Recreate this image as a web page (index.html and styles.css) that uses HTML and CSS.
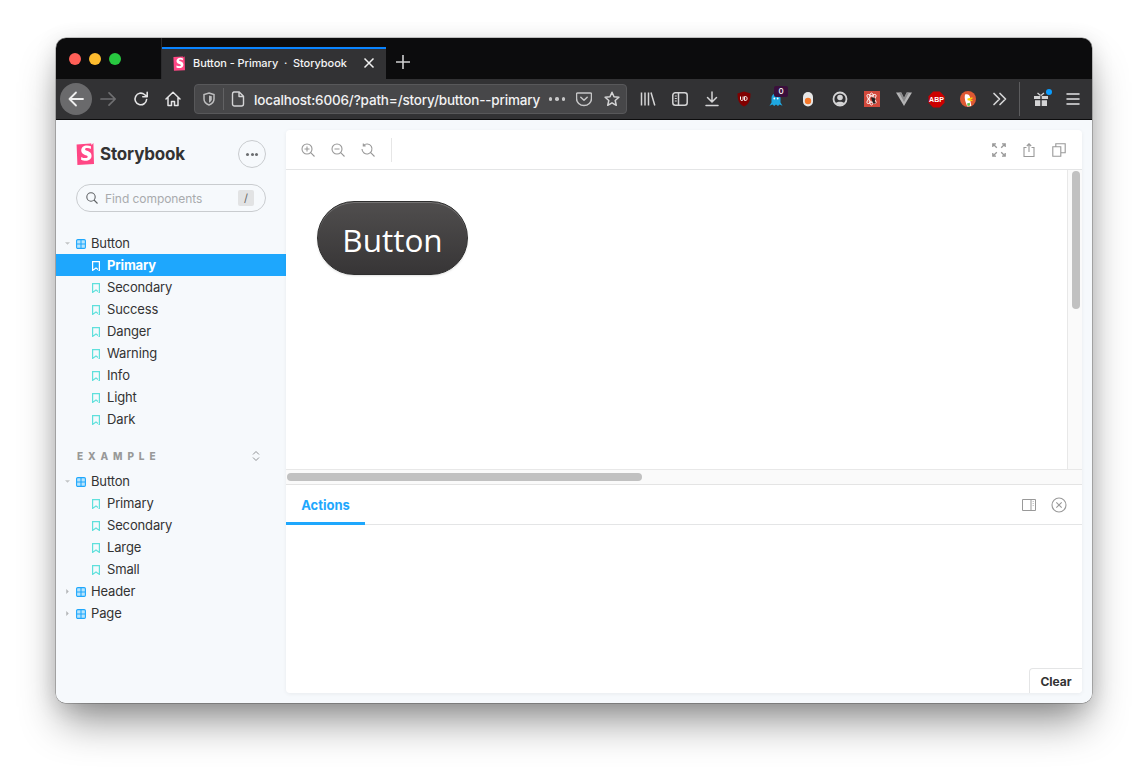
FILE: index.html
```html
<!DOCTYPE html>
<html lang="en">
<head>
<meta charset="utf-8">
<title>Button - Primary · Storybook</title>
<link rel="stylesheet" href="styles.css">
</head>
<body>
<svg class="sprite" aria-hidden="true">
  <symbol id="sb" viewBox="0 0 18 22"><path d="M0.6 1.4 L14.6 0.5 L15 0 L15.6 2 L17.4 0 L18 21 L1.4 22 Z" fill="#ff4785"/><path transform="matrix(1.16 0 0 1.13 -.33 -.7)" d="M13.2 3.6l-.1 2.3c-.9-.5-2-.8-3.2-.8-1.1 0-1.8.4-1.800 1.100 0 1.900 5.600 1 5.600 5.700 0 2.900-2.300 4.500-5.100 4.500-1.300 0-2.800-.3-3.900-.9l.1-2.600c1.100.7 2.500 1.100 3.700 1.100 1.100 0 1.900-.4 1.900-1.200 0-2-5.600-1.200-5.600-5.600 0-2.700 2.100-4.400 5-4.400 1.200 0 2.300.2 3.400.8z" fill="#fff"/></symbol>
  <symbol id="grid" viewBox="0 0 10 10"><rect x=".6" y=".6" width="8.8" height="8.8" rx="1.200" fill="#b9e4fb" stroke="#1ea7fd" stroke-width="1.100"/><path d="M5 1v8M1 5h8" stroke="#1ea7fd" stroke-width="1.100"/></symbol>
  <symbol id="mark" viewBox="0 0 8 10"><path d="M.6.6h6.800v8.800L4 7 .6 9.400z" fill="none" stroke="currentColor" stroke-width="1.200"/></symbol>
  <symbol id="caret-d" viewBox="0 0 6 6"><path d="M0 1.500h6L3 4.500z" fill="#c2c4c6"/></symbol>
  <symbol id="caret-r" viewBox="0 0 6 6"><path d="M1.500 0v6l3-3z" fill="#b4b6b8"/></symbol>
</svg>

<main class="window">
  <header class="titlebar">
    <div class="lights">
      <span class="light red"></span><span class="light amber"></span><span class="light green"></span>
    </div>
    <div class="tab">
      <svg class="favicon"><use href="#sb"/></svg>
      <span class="tab-title">Button - Primary &nbsp;·&nbsp; Storybook</span>
      <svg class="tab-close" viewBox="0 0 12 12"><path d="M1.500 1.500l9 9M10.500 1.500l-9 9"/></svg>
    </div>
    <svg class="new-tab" viewBox="0 0 14 14"><path d="M7 0v14M0 7h14"/></svg>
  </header>

  <nav class="toolbar">
    <span class="tool back"><svg viewBox="0 0 20 20" class="ic20"><path d="M17 10H3.500M10 3.500L3.500 10l6.500 6.500" fill="none" stroke="#eee" stroke-width="1.800" stroke-linecap="round" stroke-linejoin="round"/></svg></span>
    <span class="tool forward"><svg viewBox="0 0 20 20" class="ic20"><path d="M2 10h14M10 3.800L16.200 10 10 16.200" fill="none" stroke="#6f6f71" stroke-width="1.700" stroke-linecap="round" stroke-linejoin="round"/></svg></span>
    <span class="tool"><svg viewBox="0 0 16 16" class="ic16"><path d="M13.600 8.500A5.800 5.800 0 1 1 11.500 3.500L14 5.600M14.200 1.400v4.400H9.800" fill="none" stroke="#e4e4e5" stroke-width="1.600" stroke-linecap="round" stroke-linejoin="round"/></svg></span>
    <span class="tool"><svg viewBox="0 0 16 16" class="ic16"><path d="M1 8L8 1.300 15 8M3 6.500v8h3.500v-4h3v4H13v-8" fill="none" stroke="#e4e4e5" stroke-width="1.500" stroke-linecap="round" stroke-linejoin="round"/></svg></span>

    <div class="urlbar">
      <svg viewBox="0 0 14 14" class="ic14"><path d="M7 1l5 1.500v4.500c0 3-2.500 5-5 6-2.500-1-5-3-5-6V2.500z" fill="none" stroke="#bdbdbe" stroke-width="1.500"/><path d="M7 3.500l2.800.8v3c0 1.600-1.300 2.700-2.800 3.400z" fill="#bdbdbe"/></svg>
      <span class="url-sep"></span>
      <svg viewBox="0 0 14 16" class="ic-page"><path d="M2.800 1h5.400L12.500 5.300V13a2 2 0 0 1-2 2h-7a2 2 0 0 1-2-2V3a2 2 0 0 1 1.300-2zM8 1v4.500h4.500" fill="none" stroke="#d4d4d5" stroke-width="1.400" stroke-linejoin="round"/></svg>
      <span class="url-text">localhost:6006/?path=/story/button--primary</span>
      <span class="url-dots"><i></i><i></i><i></i></span>
      <svg viewBox="0 0 16 16" class="ic16 url-pocket"><path d="M1.500 2h13a1 1 0 0 1 1 1v4.500a7.500 7 0 0 1-15 0V3a1 1 0 0 1 1-1z" fill="none" stroke="#c6c6c7" stroke-width="1.500"/><path d="M4.800 6.200L8 9.300l3.200-3.100" fill="none" stroke="#c6c6c7" stroke-width="1.500" stroke-linecap="round" stroke-linejoin="round"/></svg>
      <svg viewBox="0 0 16 16" class="ic16 url-star"><path d="M8 1.300l2 4.500 4.900.5-3.700 3.200 1.100 4.800L8 11.800l-4.300 2.500 1.100-4.800L1.100 6.300 6 5.800z" fill="none" stroke="#d4d4d5" stroke-width="1.500" stroke-linejoin="round"/></svg>
    </div>

    <div class="extensions">
      <span class="tool"><svg viewBox="0 0 16 16" class="ic16"><path d="M1.500 1.500v13M5 1.500v13M8.500 1.500v13M11 1.500l3.800 13" fill="none" stroke="#d4d4d5" stroke-width="1.500"/></svg></span>
      <span class="tool"><svg viewBox="0 0 16 16" class="ic16"><rect x=".8" y="1.800" width="14.400" height="12.400" rx="2.500" fill="none" stroke="#d4d4d5" stroke-width="1.500"/><path d="M6.500 2v12" stroke="#d4d4d5" stroke-width="1.500"/><path d="M2.800 5h2M2.800 7.500h2M2.800 10h2" stroke="#d4d4d5"/></svg></span>
      <span class="tool"><svg viewBox="0 0 16 16" class="ic16"><path d="M8 1v9.500M3.500 6.500L8 11l4.500-4.500M2 14.500h12" fill="none" stroke="#d4d4d5" stroke-width="1.500" stroke-linecap="round" stroke-linejoin="round"/></svg></span>
      <span class="tool"><svg viewBox="0 0 16 16" class="ic16"><path d="M8 .5l6.500 2c0 6-1 10.500-6.500 13-5.500-2.500-6.500-7-6.500-13z" fill="#800000"/><path d="M4.500 5.500v3c0 1.300 2.600 1.300 2.600 0v-3M8.600 5.500v4h1c2 0 2-4 0-4z" fill="none" stroke="#fff"/></svg></span>
      <span class="tool ghost"><svg viewBox="0 0 16 16" class="ic16"><path d="M1.500 14.800l2-3.300V7a4.500 4.500 0 0 1 9 0v4.500l2 3.300-3-1.200-1.500 1.400L8 13.400l-1.800 1.700-1.700-1.500z" fill="#1ea7e0"/><circle cx="6.300" cy="7.500" r=".9" fill="#fff"/><circle cx="9.700" cy="7.500" r=".9" fill="#fff"/></svg><b class="badge">0</b></span>
      <span class="tool"><svg viewBox="0 0 16 16" class="ic16"><rect x="3" y="1" width="10" height="14.500" rx="5" fill="#e6e6e6"/><circle cx="8" cy="10" r="3.200" fill="#f5782b"/></svg></span>
      <span class="tool"><svg viewBox="0 0 16 16" class="ic16"><circle cx="8" cy="8" r="6.500" fill="none" stroke="#d4d4d5" stroke-width="1.800"/><circle cx="8" cy="6.500" r="2.800" fill="#d4d4d5"/><path d="M3.500 12.500c1-2.500 8-2.500 9 0l-4.500 2z" fill="#d4d4d5"/></svg></span>
      <span class="tool"><svg viewBox="0 0 16 16" class="ic16"><rect width="16" height="16" fill="#d2493c"/><g fill="none" stroke="#fff" stroke-width=".9"><ellipse cx="7.500" cy="8" rx="6" ry="2.400" transform="rotate(45 7.500 8)"/><ellipse cx="7.500" cy="8" rx="6" ry="2.400" transform="rotate(-45 7.500 8)"/><ellipse cx="7.500" cy="8" rx="6" ry="2.400" transform="rotate(90 7.500 8)"/></g><path d="M7 6.500h3l1.500 1.500-.8 2.200 1.300 2-2.500.5-1.300-2.500z" fill="#23201f"/></svg></span>
      <span class="tool"><svg viewBox="0 0 16 16" class="ic16"><path d="M0 1.500h5.300L8 7l2.700-5.500H16L8 15z" fill="#b4b4b5"/><path d="M3 1.500h2.300L8 7l2.700-5.500H13L8 11z" fill="#8b8b8c"/></svg></span>
      <span class="tool"><svg viewBox="0 0 17 17" class="ic17"><path d="M5.200.5h6.600l4.700 4.700v6.600l-4.700 4.700H5.200L.5 11.800V5.200z" fill="#cc0000"/><text x="8.500" y="11.300" class="abp">ABP</text></svg></span>
      <span class="tool"><svg viewBox="0 0 16 16" class="ic16"><circle cx="8" cy="8" r="8" fill="#de5833"/><path d="M5 3.500c3-1 5 .5 5 3 0 2 .8 5 1.300 8.500l-4 .5C6 12 4 8 5 3.500z" fill="#fff"/><path d="M7.500 7.500l5-1.200v1.500l-2.500.7 2.500.4v1.400l-5-1z" fill="#fdd209"/><path d="M7 12.500l2.800-.8.300 2.800-2.500.5z" fill="#65bc46"/></svg></span>
      <span class="tool"><svg viewBox="0 0 16 16" class="ic16"><path d="M2 2.500L7.500 8 2 13.500M8 2.500L13.500 8 8 13.500" fill="none" stroke="#d4d4d5" stroke-width="1.700" stroke-linecap="round" stroke-linejoin="round"/></svg></span>
    </div>
    <span class="tool-sep"></span>
    <span class="tool gift"><svg viewBox="0 0 16 16" class="ic16"><path d="M1 5h6.300v3H1zM8.700 5H15v3H8.700zM2 9.300h5.300V15H2zM8.700 9.300H14V15H8.700z" fill="#d4d4d5"/><path d="M4.500 2l3 2.500M11 2L8 4.500" stroke="#d4d4d5" stroke-width="1.300"/></svg><i class="gift-dot"></i></span>
    <span class="tool"><svg viewBox="0 0 16 16" class="ic16"><path d="M2 3h12M2 8h12M2 13h12" stroke="#e4e4e5" stroke-width="1.500" stroke-linecap="round"/></svg></span>
  </nav>

  <div class="app">
    <aside class="sidebar">
      <div class="brand">
        <div class="logo">
          <svg class="logo-mark"><use href="#sb"/></svg>
          <span class="logo-text">Storybook</span>
        </div>
        <span class="menu-btn"><i></i><i></i><i></i></span>
      </div>
      <div class="search">
        <svg viewBox="0 0 12 12" class="search-ic"><circle cx="5" cy="5" r="4.200"/><path d="M8 8l3.500 3.500"/></svg>
        <span class="search-ph">Find components</span>
        <kbd class="search-key">/</kbd>
      </div>

      <ul class="tree">
        <li class="row comp"><svg class="caret"><use href="#caret-d"/></svg><svg class="grid"><use href="#grid"/></svg>Button</li>
        <li class="row story active"><svg class="mark"><use href="#mark"/></svg>Primary</li>
        <li class="row story"><svg class="mark"><use href="#mark"/></svg>Secondary</li>
        <li class="row story"><svg class="mark"><use href="#mark"/></svg>Success</li>
        <li class="row story"><svg class="mark"><use href="#mark"/></svg>Danger</li>
        <li class="row story"><svg class="mark"><use href="#mark"/></svg>Warning</li>
        <li class="row story"><svg class="mark"><use href="#mark"/></svg>Info</li>
        <li class="row story"><svg class="mark"><use href="#mark"/></svg>Light</li>
        <li class="row story"><svg class="mark"><use href="#mark"/></svg>Dark</li>
      </ul>

      <div class="group">
        <span class="group-title">EXAMPLE</span>
        <svg viewBox="0 0 8 12" class="group-ic"><path d="M1 4.500L4 1.500l3 3M1 7.500l3 3 3-3"/></svg>
      </div>

      <ul class="tree">
        <li class="row comp"><svg class="caret"><use href="#caret-d"/></svg><svg class="grid"><use href="#grid"/></svg>Button</li>
        <li class="row story"><svg class="mark"><use href="#mark"/></svg>Primary</li>
        <li class="row story"><svg class="mark"><use href="#mark"/></svg>Secondary</li>
        <li class="row story"><svg class="mark"><use href="#mark"/></svg>Large</li>
        <li class="row story"><svg class="mark"><use href="#mark"/></svg>Small</li>
        <li class="row comp"><svg class="caret"><use href="#caret-r"/></svg><svg class="grid"><use href="#grid"/></svg>Header</li>
        <li class="row comp"><svg class="caret"><use href="#caret-r"/></svg><svg class="grid"><use href="#grid"/></svg>Page</li>
      </ul>
    </aside>

    <section class="panel">
      <div class="preview-bar">
        <div class="bar-left">
          <svg viewBox="0 0 14 14" class="bar-ic"><circle cx="6" cy="6" r="5"/><path d="M9.700 9.700L13.500 13.500M6 3.500v5M3.500 6h5"/></svg>
          <svg viewBox="0 0 14 14" class="bar-ic"><circle cx="6" cy="6" r="5"/><path d="M9.700 9.700L13.500 13.500M3.500 6h5"/></svg>
          <svg viewBox="0 0 14 14" class="bar-ic"><path d="M2.300 2.600A5 5 0 1 1 1 6M2.300.6v2.300h2.300M9.700 9.700L13.500 13.500"/></svg>
          <span class="bar-sep"></span>
        </div>
        <div class="bar-right">
          <svg viewBox="0 0 14 14" class="bar-ic strong"><path d="M1 1l3.800 3.800M13 1L9.200 4.800M1 13l3.800-3.800M13 13L9.200 9.200M.8 4V.8H4M10 .8h3.200V4M.8 10v3.200H4M10 13.200h3.200V10"/></svg>
          <svg viewBox="0 0 14 14" class="bar-ic"><path d="M4.500 4.500H2v9h10v-9H9.500M7 9V.8M4.800 3L7 .8 9.200 3"/></svg>
          <svg viewBox="0 0 14 14" class="bar-ic"><path d="M.8 3.800h8v9.400h-8zM3.800 3.800V.8h9.400v9h-4.400"/></svg>
        </div>
      </div>

      <div class="canvas-wrap">
        <div class="canvas">
          <button class="demo-btn" type="button">Button</button>
        </div>
        <div class="v-track"><span class="v-thumb"></span></div>
      </div>
      <div class="h-track"><span class="h-thumb"></span></div>

      <div class="addons">
        <div class="addon-tabs">
          <span class="addon-tab">Actions</span>
          <div class="addon-tools">
            <svg viewBox="0 0 14 12" class="addon-ic"><path d="M.5.500h13v11H.5zM9 .5v11"/><path d="M10.500 2.500h1.500M10.500 4.500h1.500M10.500 6.500h1.500" class="faint"/></svg>
            <svg viewBox="0 0 16 16" class="addon-close"><circle cx="8" cy="8" r="7"/><path d="M5.300 5.300l5.400 5.400M10.700 5.300l-5.400 5.400"/></svg>
          </div>
        </div>
        <div class="addon-body"><button class="clear" type="button">Clear</button></div>
      </div>
    </section>
  </div>
</main>
</body>
</html>
```

FILE: styles.css
```css
* { box-sizing: border-box; }
html, body { height: 100%; }
body {
  margin: 0;
  padding: 38px 56px 0;
  background: #fff;
  overflow: hidden;
  font-family: "Inter", "Liberation Sans", sans-serif;
}
.sprite { display: none; }
ul { list-style: none; margin: 0; padding: 0; }

.window {
  width: 1036px;
  height: 665px;
  display: flex;
  flex-direction: column;
  border-radius: 10px;
  overflow: hidden;
  box-shadow: 0 0 0 .5px rgba(0,0,0,.4), 0 24px 42px -6px rgba(0,0,0,.42), 0 4px 22px rgba(0,0,0,.13);
}

/* title bar */
.titlebar {
  height: 41px;
  flex: none;
  display: flex;
  align-items: stretch;
  background: #0c0c0d;
}
.lights {
  width: 106px;
  flex: none;
  display: flex;
  align-items: flex-start;
  gap: 8px;
  padding: 15px 0 0 13px;
  border-right: 1px solid #2b2b2d;
}
.light { width: 12px; height: 12px; border-radius: 50%; }
.red { background: #ff5f57; }
.amber { background: #febc2e; }
.green { background: #28c840; }
.tab {
  width: 224px;
  margin-top: 9px;
  flex: none;
  display: flex;
  align-items: center;
  padding: 0 11px 2px;
  background: #323234;
  border-top: 2px solid #0a84ff;
}
.favicon { width: 12px; height: 15px; flex: none; }
.tab-title {
  margin-left: 8px;
  flex: 1;
  font-size: 11px;
  font-weight: 500;
  letter-spacing: -.06px;
  color: #f4f4f5;
  white-space: nowrap;
}
.tab-close { width: 12px; height: 12px; flex: none; fill: none; stroke: #f0f0f0; stroke-width: 1.500; }
.new-tab { width: 14px; height: 14px; margin: 17px 0 0 10px; fill: none; stroke: #d0d0d1; stroke-width: 1.600; }

/* toolbar */
.toolbar {
  height: 41px;
  flex: none;
  display: flex;
  align-items: center;
  padding: 0 3px 0 4px;
  background: #323234;
  border-bottom: 1px solid #0c0c0d;
}
.tool {
  width: 32px;
  height: 32px;
  flex: none;
  display: flex;
  align-items: center;
  justify-content: center;
  position: relative;
}
.back { background: #6a6a6c; border-radius: 50%; }
.forward { margin-left: 1px; }
.ic20 { width: 20px; height: 20px; }
.ic16 { width: 16px; height: 16px; }
.ic17 { width: 17px; height: 17px; }
.ic14 { width: 14px; height: 14px; flex: none; }
.ic-page { width: 14px; height: 16px; flex: none; }
.urlbar {
  width: 433px;
  height: 30px;
  margin: 0 5px;
  flex: none;
  display: flex;
  align-items: center;
  padding: 0 6px 0 7px;
  background: #474749;
  border: 1px solid #58585a;
  border-radius: 4px;
}
.url-sep { width: 1px; height: 22px; margin: 0 7px; background: #626264; flex: none; }
.url-text {
  margin-left: 9px;
  padding-top: 2px;
  font-size: 13.500px;
  font-weight: 500;
  color: #f2f2f3;
  white-space: nowrap;
  flex: 1;
  letter-spacing: -.17px;
}
.url-dots { display: flex; gap: 3px; width: 16px; flex: none; margin-right: 11px; }
.url-dots i { width: 3.300px; height: 3.300px; border-radius: 50%; background: #c6c6c7; }
.url-pocket { flex: none; margin-right: 12px; }
.url-star { flex: none; }
.extensions { display: flex; flex: none; }
.badge {
  position: absolute;
  top: 3px;
  left: 14px;
  min-width: 14px;
  height: 11px;
  border-radius: 2px;
  background: #3a0f3c;
  color: #fff;
  font-size: 8px;
  font-weight: 500;
  line-height: 11px;
  text-align: center;
}
.abp { font-family: "Liberation Sans", sans-serif; font-size: 7px; font-weight: 700; fill: #fff; text-anchor: middle; }
.tool-sep { width: 1px; height: 34px; margin: 0 5px 0 3px; background: #5c5c5e; flex: none; }
.gift-dot {
  position: absolute;
  top: 6px;
  right: 5px;
  width: 6px;
  height: 6px;
  border-radius: 50%;
  background: #0a9dff;
}

/* app */
.app { flex: 1; display: flex; min-height: 0; background: #f6f9fc; }
.sidebar { width: 230px; flex: none; color: #333; }
.brand {
  height: 28px;
  margin: 20px 20px 16px;
  display: flex;
  align-items: center;
  justify-content: space-between;
}
.logo { display: flex; align-items: center; }
.logo-mark { width: 18px; height: 22px; flex: none; }
.logo-text { margin-left: 6px; font-size: 17px; font-weight: 700; color: #333; letter-spacing: -.17px; }
.menu-btn {
  width: 28px;
  height: 28px;
  display: flex;
  align-items: center;
  justify-content: center;
  gap: 1.500px;
  border: 1px solid #c8cbce;
  border-radius: 50%;
}
.menu-btn i { width: 3px; height: 3px; border-radius: 50%; background: #6b6d70; }
.search {
  height: 28px;
  margin: 0 20px 20px;
  display: flex;
  align-items: center;
  padding: 0 4px 0 9px;
  border: 1px solid #c9cccf;
  border-radius: 14px;
}
.search-ic { width: 12px; height: 12px; flex: none; fill: none; stroke: #5f6265; stroke-width: 1.100; }
.search-ph { margin-left: 7px; flex: 1; font-size: 12px; letter-spacing: -.06px; color: #a9abad; }
.search-key {
  width: 16px;
  height: 16px;
  font-family: "Inter", "Liberation Sans", sans-serif;
  font-size: 11px;
  line-height: 16px;
  text-align: center;
  color: #666;
  background: #e2e3e4;
  border-radius: 2px;
  margin-right: 7px;
}
.row {
  height: 22px;
  display: flex;
  align-items: center;
  font-size: 13px;
  letter-spacing: -.15px;
  color: #333;
}
.comp { padding-left: 9px; }
.caret { width: 5px; height: 5px; flex: none; margin-right: 6px; margin-top: 1px; }
.grid { width: 10px; height: 10px; flex: none; margin-right: 5px; margin-top: 2px; }
.story { padding-left: 36px; }
.mark { width: 8px; height: 10px; flex: none; margin-right: 7px; margin-top: 2px; color: #5fe0dc; }
.active { background: #1ea7fd; color: #fff; font-weight: 700; }
.active .mark { color: #fff; }
.group {
  height: 40px;
  display: flex;
  align-items: center;
  justify-content: space-between;
  padding: 20px 26px 8px 21px;
}
.group-title { font-size: 10px; font-weight: 800; letter-spacing: .49em; color: #999; }
.group-ic { width: 8px; height: 12px; fill: none; stroke: #8f9194; stroke-width: 1; }

/* panel */
.panel {
  width: 796px;
  height: 563px;
  margin-top: 10px;
  display: flex;
  flex-direction: column;
  background: #fff;
  border-radius: 4px;
  box-shadow: 0 1px 4px rgba(0,0,0,.06);
  overflow: hidden;
}
.preview-bar {
  height: 40px;
  flex: none;
  display: flex;
  align-items: center;
  justify-content: space-between;
  padding: 0 16px 0 15px;
  border-bottom: 1px solid #e4e5e6;
}
.bar-left, .bar-right { display: flex; align-items: center; gap: 16px; }
.bar-ic { width: 14px; height: 14px; flex: none; fill: none; stroke: #999; stroke-width: 1.100; }
.bar-ic.strong { stroke-width: 1.300; }
.bar-sep { width: 1px; height: 24px; background: #e6e6e6; }
.canvas-wrap { height: 299px; flex: none; display: flex; }
.canvas { flex: 1; padding: 31px; background: #fff; }
.demo-btn {
  display: block;
  width: 151px;
  height: 74px;
  padding: 3px 0 0;
  font-family: "Open Sans", sans-serif;
  font-size: 31.500px;
  line-height: 1;
  color: #fff;
  background: linear-gradient(#504e4e, #373536);
  border: 1px solid #2f2f2f;
  border-radius: 37px;
  box-shadow: inset 0 1px 0 rgba(255,255,255,.22), 0 1px 2px rgba(0,0,0,.12);
}
.v-track {
  width: 15px;
  flex: none;
  padding: 1px 3px 0 4px;
  background: #fafafa;
  border-left: 1px solid #e8e8e8;
}
.v-thumb { display: block; width: 8px; height: 138px; border-radius: 4px; background: #c1c1c1; }
.h-track {
  height: 16px;
  flex: none;
  padding: 3px 0 0 1px;
  background: #fafafa;
  border-top: 1px solid #e8e8e8;
  border-bottom: 1px solid #e4e4e4;
}
.h-thumb { display: block; width: 355px; height: 8px; border-radius: 4px; background: #c1c1c1; }
.addons { flex: 1; display: flex; flex-direction: column; min-height: 0; }
.addon-tabs {
  height: 40px;
  flex: none;
  display: flex;
  align-items: stretch;
  justify-content: space-between;
  border-bottom: 1px solid #e4e5e6;
}
.addon-tab {
  width: 79px;
  display: flex;
  align-items: center;
  justify-content: center;
  font-size: 13px;
  font-weight: 700;
  color: #1ea7fd;
  border-bottom: 3px solid #1ea7fd;
  margin-bottom: -1px;
  padding-top: 3px;
}
.addon-tools { display: flex; align-items: center; gap: 15px; padding-right: 15px; }
.addon-ic { width: 14px; height: 12px; fill: none; stroke: #999; stroke-width: 1; }
.addon-ic .faint { stroke: #ccc; }
.addon-close { width: 16px; height: 16px; fill: none; stroke: #999; stroke-width: 1.100; }
.addon-body { flex: 1; display: flex; align-items: flex-end; justify-content: flex-end; }
.clear {
  width: 53px;
  height: 25px;
  padding: 0;
  font-family: "Inter", "Liberation Sans", sans-serif;
  font-size: 12px;
  font-weight: 700;
  color: #333;
  background: #fff;
  border: 1px solid #e4e5e6;
  border-width: 1px 0 0 1px;
  border-radius: 4px 0 0 0;
}
```
